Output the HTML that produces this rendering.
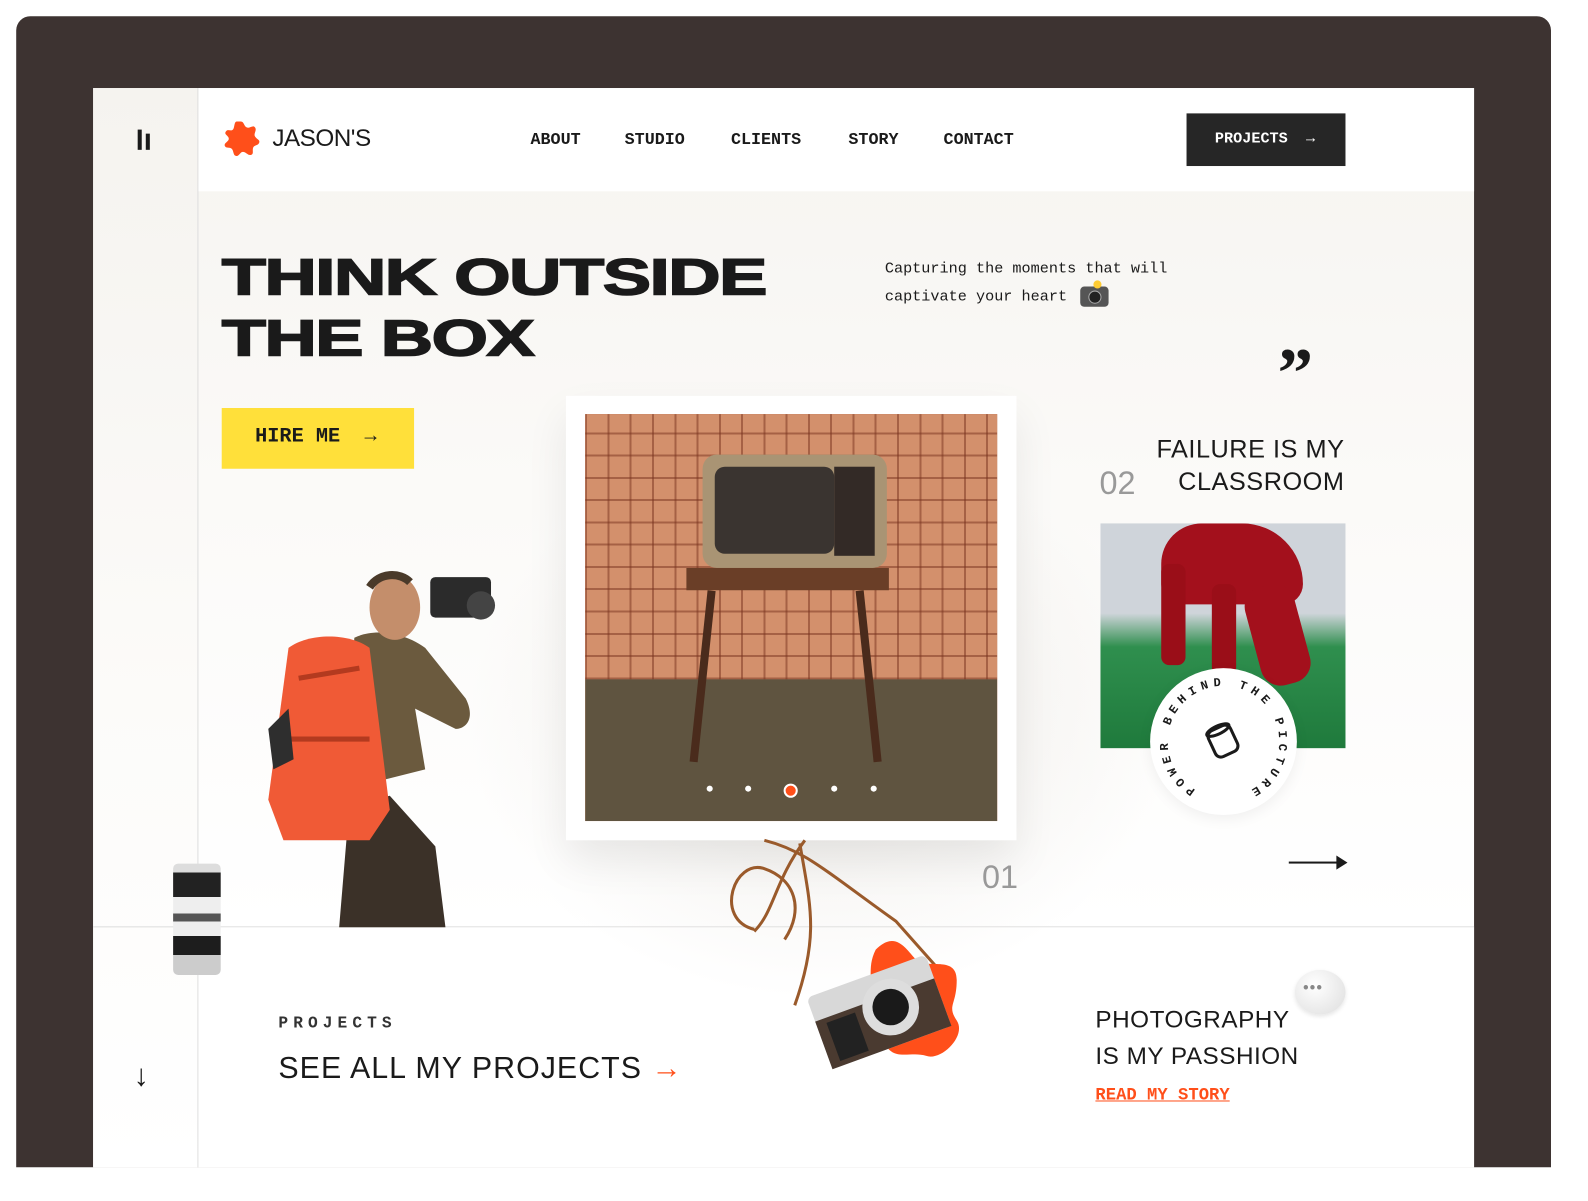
<!DOCTYPE html>
<html><head><meta charset="utf-8"><style>
html,body{margin:0;padding:0;background:#fff;width:1588px;height:1186px;overflow:hidden}
#s{position:absolute;left:0;top:0;width:1570px;height:1186px;transform:scale(1.0124);transform-origin:0 0}
.a{position:absolute}
.mono{font-family:"Liberation Mono",monospace}
.sans{font-family:"Liberation Sans",sans-serif}
.nav{font-family:"Liberation Mono",monospace;font-weight:bold;font-size:16.5px;color:#1a1a1a;top:128px}
.thin{font-family:"Liberation Sans",sans-serif;color:#1a1a1a;font-weight:normal;letter-spacing:0.5px}
</style></head><body><div id="s">
<div class="a" style="left:16px;top:16px;width:1516px;height:1137px;background:#3d3331;border-radius:14px 14px 0 0"></div>
<div class="a" style="left:92px;top:87px;width:1364px;height:1066px;background:linear-gradient(#f6f4f0 0px,#fbfaf8 400px,#fff 830px)"></div>
<div class="a" style="left:92px;top:87px;width:103px;height:1066px;background:linear-gradient(#f5f3ef,#fcfbf9 600px,#fff);border-right:1px solid #ddd"></div>
<div class="a" style="left:196px;top:87px;width:1260px;height:102px;background:#fff"></div>
<div class="a" style="left:92px;top:915px;width:1364px;height:1px;background:#ddd"></div>
<div class="a" style="left:196px;top:916px;width:1260px;height:237px;background:#fff"></div>
<div class="a" style="left:460px;top:430px;width:700px;height:560px;border-radius:50%;background:radial-gradient(rgba(230,226,220,.6),rgba(255,255,255,0) 70%)"></div>
<!-- sidebar icon -->
<div class="a" style="left:136px;top:128px;width:4px;height:20px;background:#1a1a1a"></div>
<div class="a" style="left:144px;top:132px;width:4px;height:16px;background:#1a1a1a"></div>
<div class="a sans" style="left:132px;top:1046px;font-size:30px;color:#1a1a1a">↓</div>
<!-- logo -->
<svg class="a" style="left:219px;top:118px" width="38" height="38" viewBox="0 0 38 38"><path d="M19 2c3 0 3 5 6 6s6-3 8 0-2 6 0 9 5 3 4 6-5 2-6 5 1 6-2 7-5-3-8-3-4 5-7 4-2-5-4-7-6 0-7-3 4-4 4-7-5-4-3-7 5 0 7-2 1-8 4-8z" fill="#ff4f1a"/></svg>
<div class="a sans" style="left:269px;top:123px;font-size:24px;color:#1a1a1a;letter-spacing:-0.5px">JASON'S</div>
<div class="a nav" style="left:524px">ABOUT</div>
<div class="a nav" style="left:617px">STUDIO</div>
<div class="a nav" style="left:722px">CLIENTS</div>
<div class="a nav" style="left:838px">STORY</div>
<div class="a nav" style="left:932px">CONTACT</div>
<div class="a" style="left:1172px;top:112px;width:157px;height:52px;background:#262626"></div>
<div class="a mono" style="left:1200px;top:129px;font-size:15px;font-weight:bold;color:#fff">PROJECTS &nbsp;→</div>
<!-- headline -->
<div class="a sans" style="left:219px;top:244px;font-size:50px;font-weight:900;line-height:60px;color:#1a1a1a;-webkit-text-stroke:1.5px #1a1a1a;transform:scaleX(1.43);transform-origin:0 0;white-space:nowrap;letter-spacing:-1px">THINK OUTSIDE<br>THE BOX</div>
<div class="a mono" style="left:874px;top:252px;font-size:15px;line-height:28px;color:#1a1a1a">Capturing the moments that will<br>captivate your heart <span style="display:inline-block;width:28px;height:20px;background:#555;border-radius:4px;vertical-align:middle;margin-left:4px;position:relative"><span style="position:absolute;left:8px;top:4px;width:11px;height:11px;border-radius:50%;background:#222;border:1px solid #aaa"></span><span style="position:absolute;left:13px;top:-6px;width:8px;height:8px;background:#ffcc33;border-radius:50%"></span></span></div>
<div class="a" style="left:219px;top:403px;width:190px;height:60px;background:#ffe03a"></div>
<div class="a mono" style="left:252px;top:420px;font-size:20px;font-weight:bold;color:#1a1a1a">HIRE ME &nbsp;→</div>
<!-- photographer -->
<svg class="a" style="left:255px;top:550px" width="255" height="366" viewBox="0 0 255 366">
<path d="M80 366l10-120 40-10 45 50 10 80z" fill="#3b3128"/>
<path d="M95 80c20-10 50-5 70 10l40 50c10 20 0 30-10 30l-40-20 10 60-80 20z" fill="#6b5a3e"/>
<ellipse cx="135" cy="50" rx="25" ry="32" fill="#c48e6b"/>
<path d="M110 30c10-15 30-15 40-5" stroke="#4a3a2a" stroke-width="8" fill="none"/>
<rect x="170" y="20" width="60" height="40" rx="5" fill="#2b2b2b"/>
<circle cx="220" cy="48" r="14" fill="#444"/>
<path d="M30 90c20-15 60-15 80 0l20 160-20 30H25l-15-40z" fill="#f05a36"/>
<path d="M40 120l60-10M30 180l80 0" stroke="#b33a1f" stroke-width="5"/>
<path d="M10 170l20-20 5 50-20 10z" fill="#2e2e2e"/>
</svg>
<!-- lens -->
<div class="a" style="left:171px;top:853px;width:47px;height:110px;border-radius:5px;background:linear-gradient(#ddd 0 8%,#222 8% 30%,#eee 30% 45%,#555 45% 52%,#eee 52% 65%,#1d1d1d 65% 82%,#ccc 82%)"></div>
<!-- TV photo frame -->
<div class="a" style="left:559px;top:391px;width:445px;height:439px;background:#fff;box-shadow:0 20px 40px rgba(0,0,0,.08)"></div>
<div class="a" style="left:578px;top:409px;width:407px;height:402px;overflow:hidden;background:#b46a47">
 <div class="a" style="left:0;top:0;width:407px;height:262px;background:repeating-linear-gradient(90deg,rgba(120,50,30,.5) 0 2px,transparent 2px 22px),repeating-linear-gradient(0deg,rgba(120,50,30,.5) 0 2px,transparent 2px 22px),#d3906c"></div>
 <div class="a" style="left:0;top:262px;width:407px;height:140px;background:#5f5440"></div>
 <div class="a" style="left:116px;top:40px;width:182px;height:112px;background:#a99474;border-radius:14px"></div>
 <div class="a" style="left:128px;top:52px;width:118px;height:86px;background:#3a3430;border-radius:10px"></div>
 <div class="a" style="left:246px;top:52px;width:40px;height:88px;background:#332a26"></div>
 <div class="a" style="left:100px;top:152px;width:200px;height:22px;background:#6a3e27"></div>
 <div class="a" style="left:112px;top:174px;width:8px;height:170px;background:#4a2b1c;transform:rotate(6deg)"></div>
 <div class="a" style="left:276px;top:174px;width:8px;height:170px;background:#4a2b1c;transform:rotate(-6deg)"></div>
 <div class="a" style="left:120px;top:367px;width:6px;height:6px;border-radius:50%;background:#fff"></div>
 <div class="a" style="left:158px;top:367px;width:6px;height:6px;border-radius:50%;background:#fff"></div>
 <div class="a" style="left:196px;top:365px;width:10px;height:10px;border-radius:50%;background:#ff4f1a;border:2px solid #fff"></div>
 <div class="a" style="left:243px;top:367px;width:6px;height:6px;border-radius:50%;background:#fff"></div>
 <div class="a" style="left:282px;top:367px;width:6px;height:6px;border-radius:50%;background:#fff"></div>
</div>
<div class="a sans" style="left:970px;top:848px;font-size:32px;color:#999">01</div>
<!-- strap + camera -->
<svg class="a" style="left:715px;top:828px" width="260" height="240" viewBox="0 0 260 240">
<path d="M40 2c40 10 60 30 130 80l40 45M80 2c-30 40-30 70-50 90M30 90c-40-10-20-70 10-60s40 40 20 70M75 5c10 60 20 90-5 160" stroke="#9a5a2b" stroke-width="3" fill="none"/>
<path d="M150 110c20-20 30 0 40 10s40-5 40 20-10 25 0 40-15 40-30 35-30 5-40-10-30-15-20-40 0-35 10-55z" fill="#ff4f1a"/>
<g transform="rotate(-20 150 170)"><rect x="90" y="135" width="125" height="75" rx="6" fill="#d8d8d8"/><rect x="90" y="160" width="125" height="50" fill="#4a3a30"/><rect x="100" y="165" width="30" height="40" fill="#222"/><circle cx="165" cy="172" r="28" fill="#ddd"/><circle cx="165" cy="172" r="18" fill="#1a1a1a"/></g>
</svg>
<!-- right column -->
<div class="a" style="left:1262px;top:335px;font-family:'Liberation Serif',serif;font-weight:bold;font-size:70px;color:#1a1a1a;line-height:70px">”</div>
<div class="a sans" style="left:1086px;top:459px;font-size:32px;color:#999">02</div>
<div class="a thin" style="left:1100px;top:428px;width:228px;text-align:right;font-size:25px;line-height:32px">FAILURE IS MY<br>CLASSROOM</div>
<div class="a" style="left:1087px;top:517px;width:242px;height:222px;overflow:hidden;background:linear-gradient(#cfd4da 0 40%,#2f8f4e 55%,#1f7a3c)">
 <div class="a" style="left:60px;top:0;width:140px;height:80px;background:#a3101c;border-radius:40px 60px 20px 20px"></div>
 <div class="a" style="left:60px;top:40px;width:24px;height:100px;background:#9a0e18;border-radius:8px"></div>
 <div class="a" style="left:110px;top:60px;width:24px;height:90px;background:#9a0e18;border-radius:8px"></div>
 <div class="a" style="left:150px;top:60px;width:50px;height:100px;background:#a3101c;border-radius:20px;transform:rotate(-15deg)"></div>
</div>
<div class="a" style="left:1136px;top:660px;width:145px;height:145px;border-radius:50%;background:#fff;box-shadow:0 4px 14px rgba(0,0,0,.06)"></div>
<svg class="a" style="left:1136px;top:660px" width="145" height="145" viewBox="0 0 145 145">
<defs><path id="c" d="M72.5 72.5m-55 0a55 55 0 1 1 110 0a55 55 0 1 1-110 0"/></defs>
<g transform="rotate(-60 72.5 72.5)"><text font-family="Liberation Mono,monospace" font-size="12" font-weight="bold" fill="#1a1a1a" letter-spacing="5"><textPath href="#c" startOffset="0">POWER BEHIND THE PICTURE</textPath></text></g>
<g transform="rotate(-25 72 72)" stroke="#1a1a1a" stroke-width="3" fill="none"><rect x="60" y="58" width="24" height="28" rx="6"/><ellipse cx="72" cy="60" rx="12" ry="4"/></g>
</svg>
<div class="a" style="left:1273px;top:851px;width:50px;height:2px;background:#1a1a1a"></div>
<div class="a" style="left:1320px;top:845px;width:0;height:0;border-left:11px solid #1a1a1a;border-top:7px solid transparent;border-bottom:7px solid transparent"></div>
<!-- bottom -->
<div class="a mono" style="left:275px;top:1002px;font-size:16px;font-weight:bold;letter-spacing:5px;color:#333">PROJECTS</div>
<div class="a thin" style="left:275px;top:1039px;font-size:30px;letter-spacing:1px">SEE ALL MY PROJECTS <span style="color:#ff4f1a">→</span></div>
<div class="a thin" style="left:1082px;top:990px;font-size:24px;line-height:36px">PHOTOGRAPHY<br>IS MY PASSHION</div>
<div class="a" style="left:1279px;top:958px;width:50px;height:44px;border-radius:50%;background:radial-gradient(circle at 40% 35%,#fff,#ddd);box-shadow:0 2px 4px rgba(0,0,0,.1)"></div>
<div class="a" style="left:1287px;top:968px;font-size:16px;color:#888;font-family:'Liberation Sans';letter-spacing:1px">•••</div>
<div class="a mono" style="left:1082px;top:1073px;font-size:17px;font-weight:bold;color:#ff4f1a;text-decoration:underline">READ MY STORY</div>
</div></body></html>
